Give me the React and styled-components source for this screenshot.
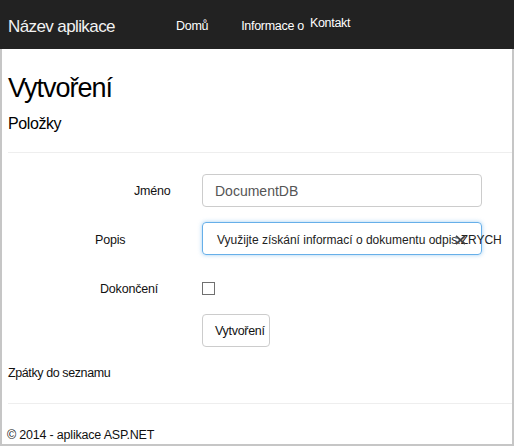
import React from "react";
import styled, { createGlobalStyle } from "styled-components";

const GlobalStyle = createGlobalStyle`
  html, body {
    margin: 0;
    padding: 0;
    background: #fff;
  }
  body {
    font-family: "Liberation Sans", Arial, sans-serif;
    color: #000;
  }
`;

const Page = styled.div`
  width: 514px;
  height: 447px;
  display: flex;
  flex-direction: column;
  overflow: hidden;
`;

// top bar
const Navbar = styled.header`
  height: 49px;
  flex: none;
  background: #222;
  display: flex;
  align-items: flex-start;
  padding-left: 8px;
  box-sizing: border-box;
`;

const Brand = styled.div`
  width: 168px;
  margin-top: 17px;
  font-size: 17px;
  line-height: 20px;
  letter-spacing: -0.6px;
  color: #f2f2f2;
  white-space: nowrap;
`;

const NavList = styled.nav`
  display: flex;
  align-items: flex-start;
`;

const NavLink = styled.a`
  padding-top: ${(p) => (p.$raised ? "16px" : "19px")};
  margin-right: ${(p) => p.$gap || 0}px;
  font-size: 12.5px;
  line-height: 15px;
  letter-spacing: -0.3px;
  color: #fff;
  text-decoration: none;
  white-space: nowrap;
`;

// bordered body below the bar
const Frame = styled.main`
  flex: 1;
  border-left: 2px solid #c6c6c6;
  border-right: 2px solid #c6c6c6;
  border-bottom: 2px solid #c6c6c6;
  margin-bottom: 1px;
  padding-left: 6px;
  display: flex;
  flex-direction: column;
`;

const Title = styled.h1`
  margin: 24px 0 0;
  font-size: 27px;
  line-height: 30px;
  font-weight: normal;
  letter-spacing: -1px;
`;

const Subtitle = styled.h4`
  margin: 12px 0 0;
  font-size: 16px;
  line-height: 18px;
  font-weight: normal;
  letter-spacing: -0.4px;
`;

const Rule = styled.hr`
  margin: ${(p) => p.$top}px 0 0;
  border: 0;
  border-top: 1px solid #eee;
  height: 0;
`;

const Form = styled.form`
  margin-top: 21px;
  display: flex;
  flex-direction: column;
`;

const Row = styled.div`
  display: grid;
  grid-template-columns: 194px 280px;
  align-items: center;
  margin-top: ${(p) => p.$top || 0}px;
`;

const Label = styled.label`
  padding-left: ${(p) => p.$indent}px;
  padding-top: ${(p) => p.$drop || 0}px;
  font-size: 12.5px;
  line-height: 15px;
  letter-spacing: -0.2px;
  color: #111;
  white-space: nowrap;
`;

const TextInput = styled.input`
  box-sizing: border-box;
  width: 280px;
  height: 33px;
  margin: 0;
  padding: 0 12px;
  border: 1px solid #ccc;
  border-radius: 4px;
  font-family: "Liberation Sans", Arial, sans-serif;
  font-size: 14px;
  color: #555;
  background: #fff;
  outline: none;
`;

const FocusedField = styled.div`
  position: relative;
  box-sizing: border-box;
  width: 280px;
  height: 33px;
  padding: 2px 0 0 14px;
  display: flex;
  align-items: center;
  border: 1px solid #66afe9;
  border-radius: 4px;
  box-shadow: 0 0 4px rgba(102, 175, 233, 0.6);
  font-size: 12px;
  color: #222;
  white-space: nowrap;
  overflow: visible;
`;

const ClearIcon = styled.svg`
  position: absolute;
  left: 252px;
  top: 12px;
`;

const CheckBox = styled.input`
  appearance: none;
  margin: 0;
  width: 13px;
  height: 13px;
  border: 1px solid #707070;
  background: #fff;
`;

const Button = styled.button`
  box-sizing: border-box;
  width: 68px;
  height: 33px;
  padding: 0 0 0 12px;
  text-align: left;
  background: #fff;
  border: 1px solid #ccc;
  border-radius: 4px;
  font-family: "Liberation Sans", Arial, sans-serif;
  font-size: 12.5px;
  letter-spacing: -0.3px;
  color: #111;
`;

const BackLink = styled.a`
  margin-top: 19px;
  font-size: 12.5px;
  line-height: 15px;
  letter-spacing: -0.4px;
  color: #111;
  text-decoration: none;
`;

const Footer = styled.footer`
  margin: 24px 0 0 -1px;
  font-size: 12.5px;
  line-height: 15px;
  letter-spacing: -0.2px;
  color: #111;
`;

const App = () => {
  return (
    <Page>
      <GlobalStyle />
      <Navbar>
        <Brand>Název aplikace</Brand>
        <NavList>
          <NavLink $gap={33}>Domů</NavLink>
          <NavLink $gap={6}>Informace o</NavLink>
          <NavLink $raised>Kontakt</NavLink>
        </NavList>
      </Navbar>
      <Frame>
        <Title>Vytvoření</Title>
        <Subtitle>Položky</Subtitle>
        <Rule $top={19} />
        <Form onSubmit={(e) => e.preventDefault()}>
          <Row>
            <Label $indent={126} $drop={1}>Jméno</Label>
            <TextInput readOnly defaultValue="DocumentDB" />
          </Row>
          <Row $top={15}>
            <Label $indent={87} $drop={3}>Popis</Label>
            <FocusedField>
              <span>Využijte získání informací o dokumentu odpis.ZRYCH</span>
              <ClearIcon width="11" height="10" viewBox="0 0 11 10">
                <path
                  d="M1 1 L10 9 M10 1 L1 9"
                  stroke="#444"
                  strokeWidth="1.7"
                  fill="none"
                />
              </ClearIcon>
            </FocusedField>
          </Row>
          <Row $top={25}>
            <Label $indent={92} $drop={2}>Dokončení</Label>
            <CheckBox type="checkbox" />
          </Row>
          <Row $top={17}>
            <span />
            <Button type="submit">Vytvoření</Button>
          </Row>
        </Form>
        <BackLink>Zpátky do seznamu</BackLink>
        <Rule $top={22} />
        <Footer>© 2014 - aplikace ASP.NET</Footer>
      </Frame>
    </Page>
  );
};

export default App;
